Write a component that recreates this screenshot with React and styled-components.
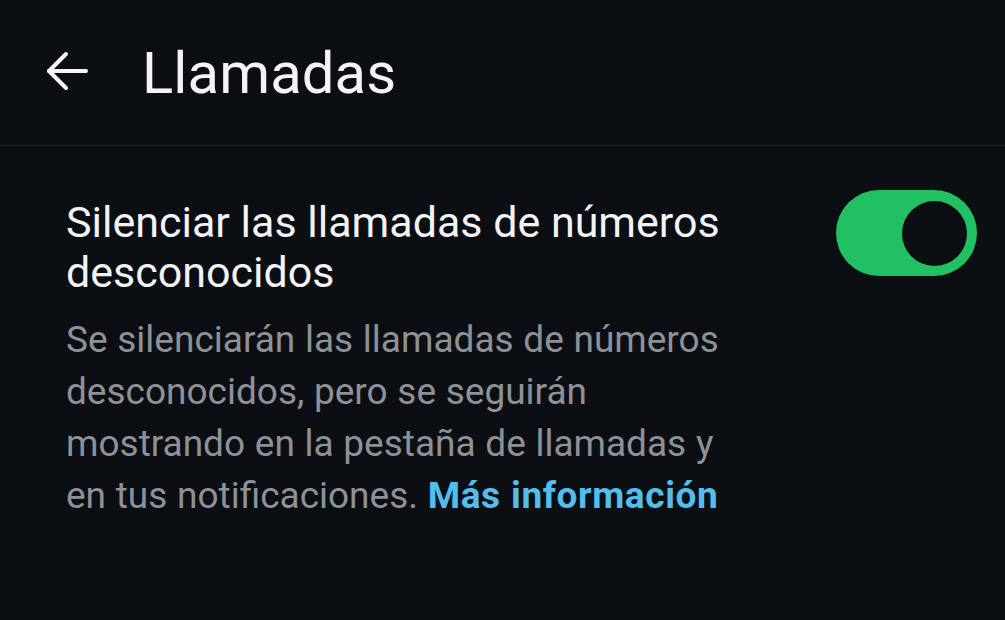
import React, { useState } from 'react';
import styled, { createGlobalStyle } from 'styled-components';

const GlobalStyle = createGlobalStyle`
  html, body {
    margin: 0;
    padding: 0;
    background: #0b0e12;
  }
  body {
    font-family: Roboto, "Noto Sans", "Liberation Sans", sans-serif;
    -webkit-font-smoothing: antialiased;
  }
`;

const Screen = styled.div`
  width: 1005px;
  height: 620px;
  background: #0b0e12;
  color: #f1f3f5;
  overflow: hidden;
`;

const Header = styled.header`
  height: 146px;
  display: flex;
  align-items: center;
  border-bottom: 1px solid #1f2328;
  padding-left: 45px;
  box-sizing: border-box;
`;

const BackButton = styled.button`
  display: flex;
  align-items: center;
  justify-content: center;
  width: 44px;
  height: 40px;
  padding: 0;
  margin: -3px 53px 0 0;
  background: none;
  border: none;
  color: #f5f6f7;
  cursor: pointer;
`;

const Title = styled.h1`
  margin: 0;
  font-size: 58px;
  font-weight: 400;
  line-height: 1;
  color: #f3f4f6;
  letter-spacing: 0.1px;
`;

const Row = styled.div`
  display: flex;
  align-items: flex-start;
  justify-content: space-between;
  padding: 44px 28px 0 66px;
`;

const TextBlock = styled.div`
  max-width: 668px;
  padding-top: 7px;
`;

const Heading = styled.div`
  font-size: 43px;
  line-height: 50px;
  color: #f1f3f5;
`;

const Description = styled.p`
  margin: 17px 0 0 0;
  font-size: 37px;
  line-height: 52px;
  color: #8e9297;
  word-spacing: 0.5px;
`;

const Link = styled.a`
  color: #53bdeb;
  font-weight: 700;
  letter-spacing: 0.6px;
  text-decoration: none;
`;

const Track = styled.button`
  flex: none;
  width: 141px;
  height: 86px;
  border-radius: 43px;
  border: none;
  padding: 0 10px;
  display: flex;
  align-items: center;
  justify-content: ${(p) => (p.$on ? 'flex-end' : 'flex-start')};
  background: ${(p) => (p.$on ? '#21c063' : '#3a3f45')};
  cursor: pointer;
`;

const Knob = styled.span`
  width: 65px;
  height: 65px;
  border-radius: 50%;
  background: #0b0e12;
`;

const ArrowIcon = () => (
  <svg width="44" height="40" viewBox="0 0 44 40" fill="none" stroke="currentColor" strokeWidth="4" strokeLinecap="round" strokeLinejoin="round">
    <path d="M41 20H4" />
    <path d="M21 3L4 20L21 37" />
  </svg>
);

export default function App() {
  const [on, setOn] = useState(true);
  return (
    <Screen>
      <GlobalStyle />
      <Header>
        <BackButton aria-label="Atrás">
          <ArrowIcon />
        </BackButton>
        <Title>Llamadas</Title>
      </Header>
      <Row>
        <TextBlock>
          <Heading>Silenciar las llamadas de números desconocidos</Heading>
          <Description>
            Se silenciarán las llamadas de números desconocidos, pero se seguirán
            mostrando en la pestaña de llamadas y en tus notificaciones.{' '}
            <Link href="#">Más información</Link>
          </Description>
        </TextBlock>
        <Track $on={on} onClick={() => setOn(!on)} aria-label="Silenciar llamadas">
          <Knob />
        </Track>
      </Row>
    </Screen>
  );
}
